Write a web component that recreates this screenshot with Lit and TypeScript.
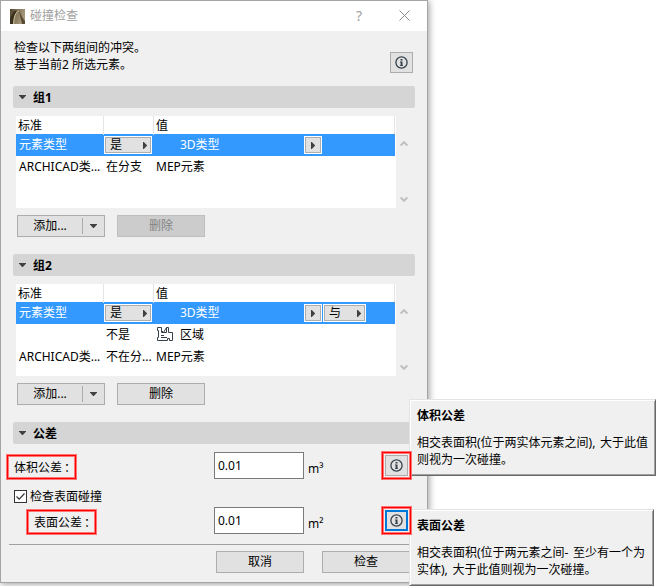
import { LitElement, html, css, svg, nothing } from 'lit';
import { customElement, property } from 'lit/decorators.js';

/** One criteria row of a group. */
interface Criterion {
  name: string;
  relation: string;
  value: string;
  selected?: boolean;
  zone?: boolean;
  joiner?: string;
}

const GROUP_1: Criterion[] = [
  { name: '元素类型', relation: '是', value: '3D类型', selected: true },
  { name: 'ARCHICAD类...', relation: '在分支', value: 'MEP元素' },
];

const GROUP_2: Criterion[] = [
  { name: '元素类型', relation: '是', value: '3D类型', selected: true, joiner: '与' },
  { name: '', relation: '不是', value: '区域', zone: true },
  { name: 'ARCHICAD类...', relation: '不在分...', value: 'MEP元素' },
];

const arrowRight = html`<svg class="arrow" width="4" height="7" viewBox="0 0 4 7">
  <path d="M0 0h.8L4 3.2v.6L.8 7H0z" fill="#404040" />
</svg>`;

const arrowDown = html`<svg width="7" height="4" viewBox="0 0 7 4">
  <path d="M0 0h7v.6L3.9 4h-.8L0 .6z" fill="#404040" />
</svg>`;

const chevron = (d: string) => html`<svg width="8" height="7" viewBox="0 0 8 7">
  ${svg`<path d=${d} fill="none" stroke="#bfbfbf" stroke-width="2" />`}
</svg>`;

const zoneIcon = html`<svg class="zone" width="17" height="15" viewBox="0 0 17 15">
  <path
    d="M.5.5h4v3l2 2 3-5h2v5h4v8h-3v-2h-2v2H.5v-3h1v-7h-1z"
    fill="none"
    stroke="#36414a"
  />
  <path d="M4.500 3.500v2h5v-5M4 8.500h3M4 10.500h6" fill="none" stroke="#36414a" />
</svg>`;

/** Small square push button with an encircled "i". */
@customElement('info-button')
export class InfoButton extends LitElement {
  static styles = css`
    :host {
      display: block;
    }

    button {
      display: flex;
      align-items: center;
      justify-content: center;
      box-sizing: border-box;
      width: 23px;
      height: 21px;
      padding: 0;
      background: #e1e1e1;
      border: 1px solid #adadad;
      border-radius: 0;
    }

    :host([focused]) button {
      border: 2px solid #0078d7;
    }

    svg {
      flex: none;
    }
  `;

  @property({ type: Boolean, reflect: true }) focused = false;

  render() {
    return html`
      <button aria-label="info">
        <svg width="13" height="13" viewBox="0 0 13 13">
          <circle cx="6.5" cy="6.5" r="5.6" fill="none" stroke="#36414a" stroke-width="1.3" />
          <path d="M5.5 3h2v1.6h-2zM5 5.6h2.5v3.6H8v.8H5v-.8h.6V6.4H5z" fill="#36414a" />
        </svg>
      </button>
    `;
  }
}

/** Criteria list with its header, scroll arrows and the add / delete buttons. */
@customElement('criteria-group')
export class CriteriaGroup extends LitElement {
  static styles = css`
    :host {
      display: block;
      padding: 8px 0 0 3px;
    }

    .list {
      display: flex;
      height: 92px;
    }

    .table {
      width: 380px;
      background: #fff;
    }

    .head,
    .row {
      display: grid;
      grid-template-columns: 88px 50px 1fr;
      width: 379px;
    }

    .head {
      height: 18px;
      line-height: 19px;
      box-sizing: border-box;
      border-right: 1px solid #e5e5e5;
    }

    .head span {
      padding-left: 2px;
      border-right: 1px solid #e5e5e5;
    }

    .head span:last-child {
      border: none;
    }

    .row {
      height: 22px;
      line-height: 22px;
      white-space: nowrap;
    }

    .row.selected {
      color: #fff;
      background: #3399ff;
    }

    .name {
      padding-left: 3px;
    }

    .relation {
      padding-left: 2px;
    }

    .selected .relation {
      padding: 2px 0 0;
    }

    .value {
      display: flex;
      padding-left: 2px;
    }

    .value.indent {
      padding-left: 26px;
    }

    .zone {
      margin: 3px 6px 0 1px;
    }

    .label {
      flex: none;
    }

    .indent .label {
      width: 124px;
    }

    .popup {
      display: flex;
      align-items: center;
      justify-content: space-between;
      box-sizing: border-box;
      height: 18px;
      padding: 0 4px;
      font: inherit;
      line-height: 14px;
      color: #000;
      background: #e1e1e1;
      border: 1px solid #fff;
      border-radius: 0;
      box-shadow: inset 0 0 0 1px #adadad;
    }

    .popup.relation-popup {
      width: 48px;
      padding: 0 4px 0 5px;
    }

    .popup.more {
      width: 18px;
      margin: 2px 1px 0 0;
      padding: 0 6px;
    }

    .popup.joiner {
      width: 43px;
      margin-top: 2px;
      padding: 0 4px 0 5px;
    }

    .scroll {
      display: flex;
      flex-direction: column;
      justify-content: space-between;
      padding: 24px 0 5px 3.5px;
    }

    .scroll svg {
      display: block;
    }

    .actions {
      display: flex;
      gap: 12px;
      padding: 7px 0 0 1px;
    }

    .action {
      display: flex;
      align-items: center;
      justify-content: center;
      box-sizing: border-box;
      width: 88px;
      height: 22px;
      padding: 0;
      font: inherit;
      line-height: 20px;
      color: #000;
      background: #e1e1e1;
      border: 1px solid #adadad;
      border-radius: 0;
    }

    .action:disabled {
      color: #838383;
      background: #ccc;
      border-color: #bfbfbf;
    }

    .action .text {
      width: 64px;
      text-align: center;
    }

    .action .drop {
      display: flex;
      flex: 1;
      align-items: center;
      justify-content: center;
      height: 16px;
      border-left: 1px solid #adadad;
    }
  `;

  @property({ attribute: false }) rows: Criterion[] = [];
  @property({ type: Boolean }) locked = false;

  private _renderRow(row: Criterion) {
    return html`
      <div class="row ${row.selected ? 'selected' : ''}">
        <span class="name">${row.name}</span>
        <span class="relation">
          ${row.selected
            ? html`<button class="popup relation-popup">${row.relation}${arrowRight}</button>`
            : row.relation}
        </span>
        <span class="value ${row.selected ? 'indent' : ''}">
          ${row.zone ? zoneIcon : nothing}
          <span class="label">${row.value}</span>
          ${row.selected ? html`<button class="popup more">${arrowRight}</button>` : nothing}
          ${row.joiner
            ? html`<button class="popup joiner">${row.joiner}${arrowRight}</button>`
            : nothing}
        </span>
      </div>
    `;
  }

  render() {
    return html`
      <div class="list">
        <div class="table">
          <div class="head"><span>标准</span><span></span><span>值</span></div>
          ${this.rows.map((row) => this._renderRow(row))}
        </div>
        <div class="scroll">
          ${chevron('M.6 5.6L4 2.2l3.4 3.4')} ${chevron('M.6 1.4L4 4.8l3.4-3.4')}
        </div>
      </div>
      <div class="actions">
        <button class="action">
          <span class="text">添加...</span><span class="drop">${arrowDown}</span>
        </button>
        <button class="action" ?disabled=${this.locked}>删除</button>
      </div>
    `;
  }
}

@customElement('app-root')
export class AppRoot extends LitElement {
  static styles = css`
    :host {
      display: block;
      position: relative;
      height: 586px;
      overflow: hidden;
      font: 12px/17px 'Noto Sans', 'Noto Sans CJK SC', sans-serif;
      color: #000;
      background: #fff;
    }

    .dialog {
      box-sizing: border-box;
      width: 428px;
      height: 583px;
      background: #f0f0f0;
      border: 1px solid #a5a5a5;
      box-shadow: 1px 1px 7px rgba(0, 0, 0, 0.4);
    }

    .titlebar {
      display: flex;
      align-items: center;
      height: 30px;
      padding: 0 17px 0 9px;
      color: #a0a0a0;
      background: #fff;
    }

    .title {
      flex: 1;
      padding-left: 5px;
      line-height: 16px;
      margin-top: -1px;
    }

    .help {
      width: 43px;
      margin-top: -2px;
      font-size: 14px;
    }

    .close {
      margin-top: -1px;
    }

    .content {
      padding: 0 12px;
    }

    .intro {
      display: flex;
      justify-content: space-between;
      height: 47px;
      padding: 8px 2px 0 1px;
    }

    .intro info-button {
      margin-top: 13px;
    }

    .intro p {
      margin: 0;
    }

    .section {
      display: flex;
      align-items: center;
      width: 402px;
      height: 22px;
      box-sizing: border-box;
      padding-left: 6px;
      gap: 7px;
      font-weight: 700;
      background: #d5d5d5;
      border-radius: 2px;
    }

    criteria-group {
      height: 138px;
    }

    .tolerance {
      display: flex;
      align-items: flex-start;
    }

    .tolerance.volume {
      height: 36px;
      padding-top: 8px;
    }

    .tolerance.surface {
      height: 37px;
      padding-top: 2px;
    }

    .mark {
      box-sizing: border-box;
      border: 1px solid #f00;
      outline: 1px solid #ff7474;
      box-shadow: inset 0 0 0 1px #ff7474;
    }

    .caption {
      display: flex;
      align-items: center;
      width: 69px;
      height: 24px;
      margin: 3px 0 0 -6px;
      padding: 0 0 0 6px;
      line-height: 17px;
      white-space: nowrap;
    }

    .surface .caption {
      margin-left: 14px;
    }

    .colon {
      margin-left: -1px;
      font-family: 'Noto Sans CJK TC', sans-serif;
    }

    .field {
      box-sizing: border-box;
      width: 90px;
      height: 27px;
      margin-left: 138px;
      padding: 0 3px;
      font: inherit;
      background: #fff;
      border: 1px solid #7a7a7a;
      border-radius: 0;
    }

    .surface .field {
      margin-left: 118px;
    }

    .unit {
      width: 74px;
      padding: 8px 0 0 4px;
    }

    /* Raised so that the frame stays above the tooltip edge */
    .info-mark {
      position: relative;
      z-index: 1;
      width: 29px;
      height: 27px;
      padding: 2px;
    }

    .check {
      display: flex;
      align-items: center;
      gap: 3px;
      height: 17px;
      padding-left: 1px;
    }

    .box {
      box-sizing: border-box;
      width: 13px;
      height: 13px;
      background: #fff;
      border: 1px solid #333;
    }

    .box svg {
      display: block;
    }

    .footer {
      display: flex;
      gap: 18px;
      margin: 0 8px;
      padding: 6px 0 0 207px;
      border-top: 1px solid #a0a0a0;
    }

    .footer button {
      flex: none;
      box-sizing: border-box;
      width: 88px;
      height: 22px;
      padding: 0;
      font: inherit;
      line-height: 20px;
      color: #000;
      background: #e1e1e1;
      border: 1px solid #adadad;
      border-radius: 0;
    }

    /* Tooltips float over the dialog's right edge */
    .tooltip {
      position: absolute;
      left: 409px;
      box-sizing: border-box;
      height: 77px;
      padding: 7px 0 0 7px;
      white-space: nowrap;
      word-spacing: 1.5px;
      background: #f0f0f0;
      border: 1px solid;
      border-color: #e3e3e3 #696969 #696969 #e3e3e3;
      box-shadow: inset 1px 1px #fff, inset -1px -1px #a0a0a0;
    }

    .tooltip.first {
      top: 399px;
      width: 247px;
    }

    .tooltip.second {
      top: 509px;
      width: 245px;
    }

    .tooltip h2 {
      margin: 0 0 10px;
      font: inherit;
      font-weight: 700;
    }

    .tooltip p {
      margin: 0;
    }
  `;

  render() {
    return html`
      <div class="dialog">
        <div class="titlebar">
          <svg width="15" height="15" viewBox="0 0 15 15">
            <defs>
              <linearGradient id="sky" x1="0" x2="1" y2=".4">
                <stop offset="0" stop-color="#4b3f2b" />
                <stop offset=".5" stop-color="#85765a" />
                <stop offset="1" stop-color="#a89b7e" />
              </linearGradient>
            </defs>
            <path d="M0 0h15v15H0z" fill="url(#sky)" />
            <path d="M0 15V9l4-7h4C5 5 4 10 3 15z" fill="#3a3020" />
            <path d="M9 2c2 3 4 8 6 10v3h-3C11 11 10 7 9 2z" fill="#5a4d36" />
            <path d="M3.500 15C4 9 5.500 3 8.500 2" fill="none" stroke="#c2b694" stroke-width="1.2" />
          </svg>
          <span class="title">碰撞检查</span>
          <span class="help">?</span>
          <svg class="close" width="11" height="11" viewBox="0 0 11 11">
            <path d="M.5.5l10 10M10.500.5l-10 10" stroke="#8c8c8c" />
          </svg>
        </div>
        <div class="content">
          <div class="intro">
            <div>
              <p>检查以下两组间的冲突。</p>
              <p>基于当前2 所选元素。</p>
            </div>
            <info-button></info-button>
          </div>
          <div class="section">${arrowDown}<span>组1</span></div>
          <criteria-group .rows=${GROUP_1} locked></criteria-group>
          <div class="section">${arrowDown}<span>组2</span></div>
          <criteria-group .rows=${GROUP_2}></criteria-group>
          <div class="section">${arrowDown}<span>公差</span></div>
          <div class="tolerance volume">
            <div class="caption mark">体积公差<span class="colon">：</span></div>
            <input class="field" value="0.01" />
            <span class="unit">m³</span>
            <div class="info-mark mark"><info-button></info-button></div>
          </div>
          <div class="check">
            <span class="box">
              <svg width="11" height="11" viewBox="0 0 11 11">
                <path d="M1.500 5.500l2.700 2.700 5.300-5.700" fill="none" stroke="#333" stroke-width="1.2" />
              </svg>
            </span>
            <span>检查表面碰撞</span>
          </div>
          <div class="tolerance surface">
            <div class="caption mark">表面公差<span class="colon">：</span></div>
            <input class="field" value="0.01" />
            <span class="unit">m²</span>
            <div class="info-mark mark"><info-button focused></info-button></div>
          </div>
        </div>
        <div class="footer">
          <button>取消</button>
          <button>检查</button>
        </div>
      </div>
      <div class="tooltip first">
        <h2>体积公差</h2>
        <p>相交表面积(位于两实体元素之间), 大于此值</p>
        <p>则视为一次碰撞。</p>
      </div>
      <div class="tooltip second">
        <h2>表面公差</h2>
        <p>相交表面积(位于两元素之间- 至少有一个为</p>
        <p>实体), 大于此值则视为一次碰撞。</p>
      </div>
    `;
  }
}

declare global {
  interface HTMLElementTagNameMap {
    'info-button': InfoButton;
    'criteria-group': CriteriaGroup;
    'app-root': AppRoot;
  }
}
